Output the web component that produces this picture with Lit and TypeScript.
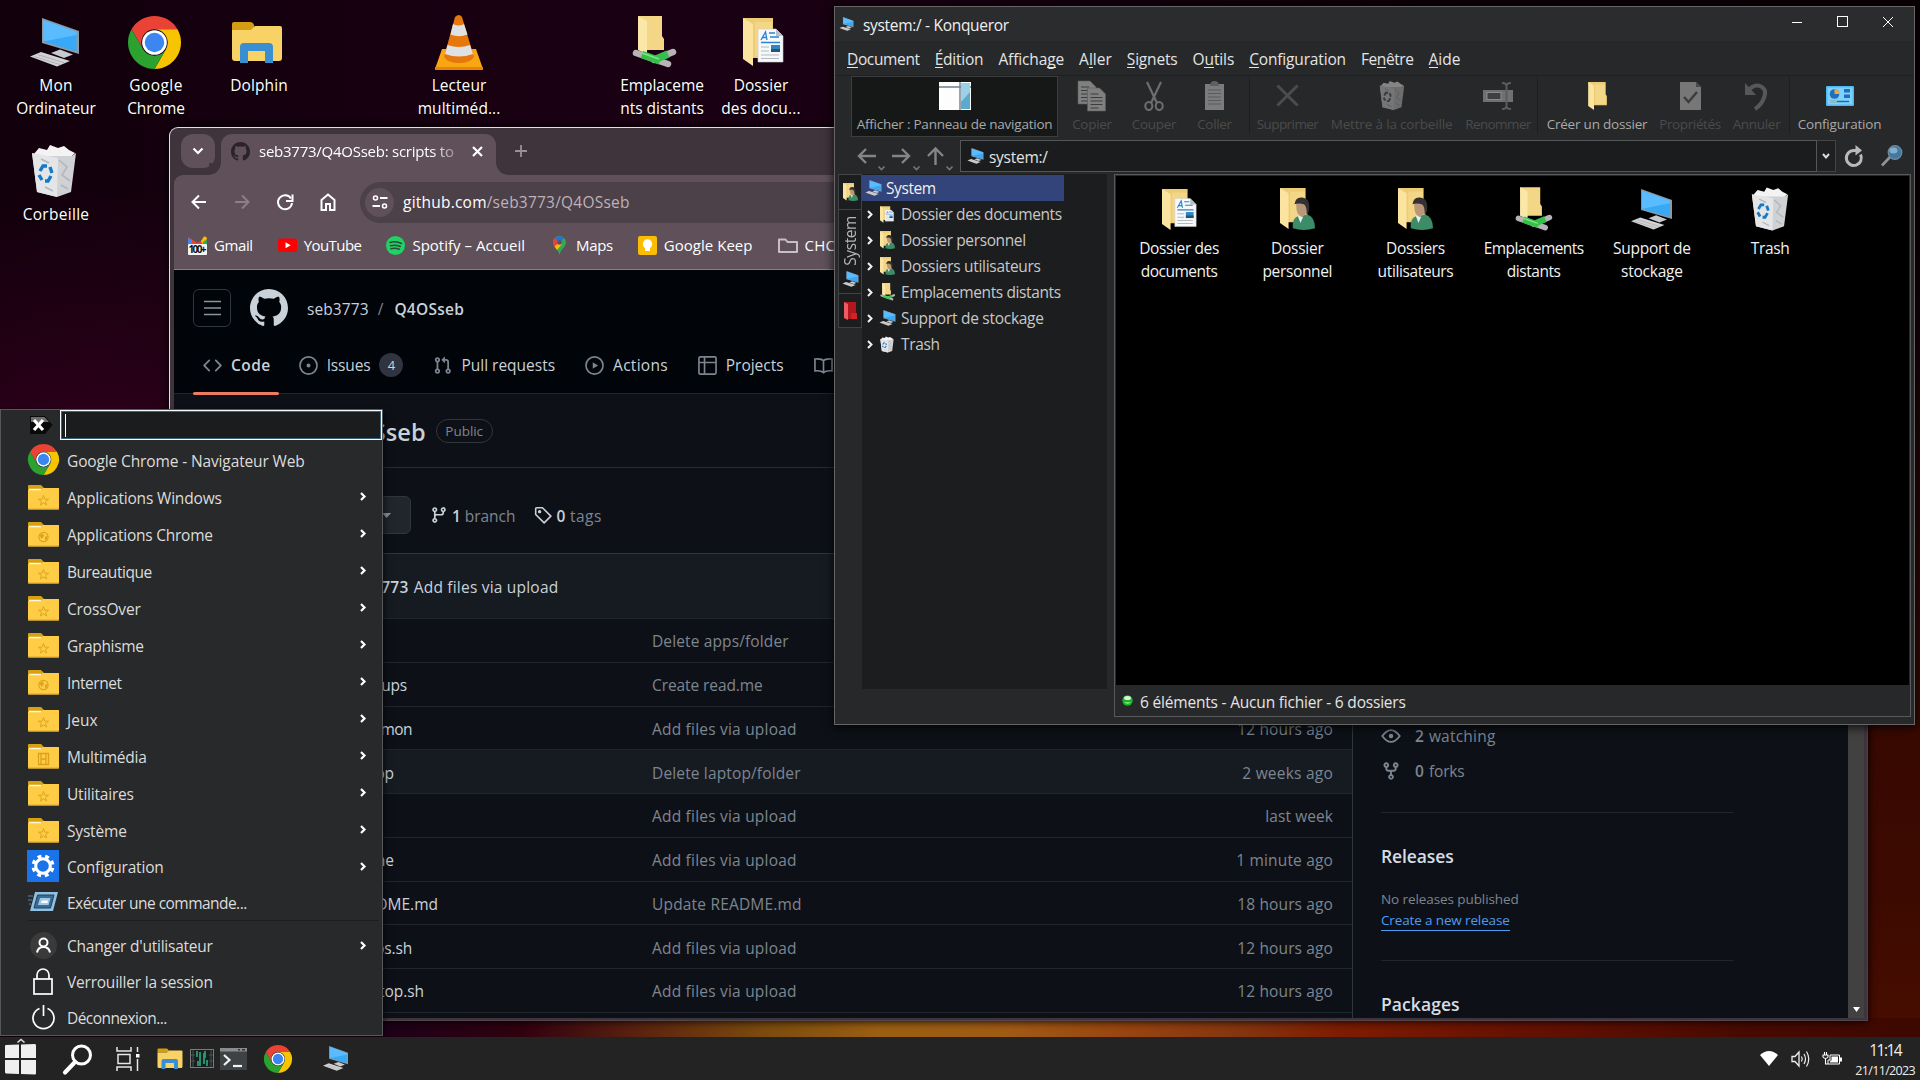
import { LitElement, html, svg, css, nothing } from "lit";
import { customElement, property } from "lit/decorators.js";
import { styleMap } from "lit/directives/style-map.js";
import { classMap } from "lit/directives/class-map.js";

/* ---------- text set to a given width ---------- */

@customElement("fit-text")
class FitText extends LitElement {
  @property({ type: Number }) w = 0;
  @property({ type: Boolean }) vertical = false;
  static styles = css`
    :host { display: inline-block; white-space: pre; flex: none; transform: translateY(var(--dy, 1px)); }
  `;
  render() {
    return html`<span><slot></slot></span>`;
  }
  firstUpdated() {
    if (!this.w) return;
    const box = (this.renderRoot.querySelector("span") as HTMLElement).getBoundingClientRect();
    const n = (this.textContent || "").length;
    const spacing = (this.w + 0.7 - (this.vertical ? box.height : box.width)) / n;
    this.style.letterSpacing = spacing.toFixed(3) + "px";
  }
}

const fit = (text: unknown, w: number) => html`<fit-text w=${w}>${text}</fit-text>`;

/* ---------- icons ---------- */

const ic = (w: number, h: number, vb: string, body: unknown) =>
  html`<svg width=${w} height=${h} viewBox=${vb} fill="none">${body}</svg>`;

const computer = (w: number, h: number) =>
  ic(w, h, "0 0 51 49", svg`
    <path d="M13 0 50 13V36L13 25Z" fill="#8d9aa5"/>
    <path d="M14.300 2 47.500 13.800V33.500L14.300 23.600Z" fill="#38a9f7"/>
    <path d="M14.300 2 47.500 13.800V17L14.300 23.600Z" fill="#5abcff"/>
    <path d="M22 35 31 31.500 44 36.500 35 40Z" fill="#c6c9cd"/>
    <path d="M1 38.500 12 34 41 43 28 48.500Z" fill="#d3d3d6"/>
    <path d="M5 38.500 31 46.500M9 36.700 35 44.700" stroke="#a7a8ad" stroke-width=".8"/>`);

const chrome = (s: number) =>
  ic(s, s, "0 0 48 48", svg`
    <path d="M3.210 12A24 24 0 0 1 44.790 12H24A12 12 0 0 0 13.610 30Z" fill="#ea4335"/>
    <path d="M44.790 12A24 24 0 0 1 24 48L34.390 30A12 12 0 0 0 24 12Z" fill="#f6c400"/>
    <path d="M24 48A24 24 0 0 1 3.210 12L13.610 30A12 12 0 0 0 34.390 30Z" fill="#2ba22f"/>
    <circle cx="24" cy="24" r="11.200" fill="#fff"/>
    <circle cx="24" cy="24" r="8.800" fill="#3b86f0"/>`);

const explorer = (w: number, h: number) =>
  ic(w, h, "0 0 52 42", svg`
    <path d="M1 3Q1 1 3 1H19Q22 1 23 4L24 9H1Z" fill="#d39e12"/>
    <path d="M1 9H20L24 5H49Q51 5 51 7V37Q51 40 48 40H4Q1 40 1 37Z" fill="#f9d266"/>
    <path d="M9 42V26Q9 22 13 22H38Q42 22 42 26V42H34V30H17V42Z" fill="#3a8ed2"/>`);

const vlc = () =>
  ic(50, 57, "0 0 50 57", svg`
    <path d="M8 35H42L49 55H1Z" fill="#f8a713"/><path d="M1 53H49V56H1Z" fill="#e98307"/>
    <path d="M21 3Q25 -1 28 3L40 43Q36 49 25 49T10 43Z" fill="#e5770d"/>
    <path d="M19 10Q25 13 30 10L33.500 20.500Q25 24 16.500 20.500Z" fill="#dfe1e3"/>
    <path d="M13.500 31Q25 35 36 31L39 40Q25 45 11 40Z" fill="#dfe1e3"/>`);

const openFolder = svg`
  <path d="M0 0H30V21L32 24V40H8Z" fill="#edcb77"/>
  <path d="M12 4H29V22L31 25V38H12Z" fill="#f3d686"/>
  <path d="M0 0 10 6V48L0 41Z" fill="#fbe4a0"/>`;

const folderDoc = (w: number, h: number) =>
  ic(w, h, "0 0 41 48", svg`${openFolder}
    <path d="M15 11H33L40 18V44H15Z" fill="#f6f8fa" stroke="#c9ccd0" stroke-width=".6"/>
    <path d="M33 11V18H40Z" fill="#b9bfc6"/>
    <path d="M18 22 22.500 14 24 22M19.500 19.500H24M26 15H32M27 19H36M18 24.500H37" stroke="#2b82cf" stroke-width="1.300"/>
    <path d="M18 29H26M18 33H26M18 37H36M18 40.500H36" stroke="#b4bac2" stroke-width="1.200"/>
    <path d="M28 27H37V34H28Z" fill="#2f86c4"/><path d="M28 31H37V34H28Z" fill="#27566b"/>`);

const folderUser = (w: number, h: number) =>
  ic(w, h, "0 0 41 49", svg`${openFolder}
    <path d="M15 47Q14 35 21 33L32 31Q41 34 41 47Q28 51 15 47Z" fill="#3c8c68"/>
    <path d="M21 33 24 31 27 34 24 41Z" fill="#e8eef0"/>
    <path d="M19 20Q19 15 25 15T32 22Q32 32 25 34 19 31 19 20Z" fill="#b9977a"/>
    <path d="M17 19Q18 10 26 11Q36 12 34 27L31 31Q32 22 28 19Q22 17 17 19Z" fill="#353132"/>`);

const folderNet = (w: number, h: number) =>
  ic(w, h, "0 0 44 53", svg`
    <path d="M6 0H30V20L32 23V34H10Z" fill="#f3d686"/>
    <path d="M6 0 15 5V38L6 34Z" fill="#fbe7a8"/>
    <path d="M4 37 36 48M22 44 41 36" stroke="#b7b3b8" stroke-width="6.500" stroke-linecap="round"/>
    <path d="M10 38.500 28 45M22 44 36 38" stroke="#35c04b" stroke-width="7.500"/>
    <path d="M10 37 27 43" stroke="#7fe38a" stroke-width="1.500"/>`);

const bin = (w: number, h: number, gray = false) =>
  ic(w, h, "0 0 46 52", svg`
    <path d="M2 10 8 3 16 5 19 0 27 3 33 1 38 5 44 8 40 12H4Z" fill=${gray ? "#858585" : "#f3f3f3"}/>
    <path d="M1 8 6 11H41L45 8 40 47 26 52 6 47Z" fill=${gray ? "#6e6e6e" : "#cfd1d4"}/>
    <path d="M1 8 27 13 26 52 6 47Z" fill=${gray ? "#767676" : "#e4e5e7"}/>
    <path d="M10 14 18 18M28 15 36 22 31 30 39 36M30 40 37 44M14 42 22 46" stroke=${gray ? "#5c5c5c" : "#b4b6ba"} stroke-width="1.600"/>
    <path d="M9 26 12 21H16M19 22 21 28M20 31 17 36H14M11 35 8 30" stroke=${gray ? "#3a3a3a" : "#1479c9"} stroke-width="3.400"/>`);

const oct = (s: number, d: string, cls = "") =>
  html`<svg class=${cls} width=${s} height=${s} viewBox="0 0 16 16" fill="currentColor"><path d=${d} /></svg>`;
const octStroke = (s: number, body: unknown) =>
  html`<svg width=${s} height=${s} viewBox="0 0 16 16" fill="none" stroke="currentColor" stroke-width="1.400">${body}</svg>`;

const GITHUB = "M8 0c4.420 0 8 3.580 8 8a8.013 8.013 0 0 1-5.450 7.590c-.4.080-.55-.17-.55-.38 0-.27.010-1.130.010-2.200 0-.75-.25-1.230-.54-1.480 1.780-.2 3.650-.88 3.650-3.950 0-.88-.31-1.590-.82-2.150.080-.2.360-1.020-.08-2.120 0 0-.67-.22-2.200.820-.64-.18-1.320-.27-2-.27-.68 0-1.360.090-2 .27-1.530-1.030-2.200-.82-2.200-.82-.44 1.100-.16 1.920-.08 2.120-.51.560-.82 1.280-.82 2.150 0 3.060 1.860 3.750 3.640 3.950-.23.200-.44.550-.51 1.070-.46.210-1.610.550-2.330-.66-.15-.24-.6-.83-1.230-.82-.67.010-.27.380.010.530.340.190.730.900.820 1.130.160.450.680 1.310 2.690.940 0 .67.010 1.300.010 1.490 0 .21-.15.450-.55.380A7.995 7.995 0 0 1 0 8c0-4.420 3.580-8 8-8Z";
const CODE = "m11.280 3.220 4.250 4.250a.75.750 0 0 1 0 1.060l-4.250 4.250a.749.749 0 0 1-1.275-.326.749.749 0 0 1 .215-.734L13.940 8l-3.720-3.720a.749.749 0 0 1 .326-1.275.749.749 0 0 1 .734.215Zm-6.560 0a.751.751 0 0 1 1.042.018.751.751 0 0 1 .018 1.042L2.060 8l3.720 3.720a.749.749 0 0 1-.326 1.275.749.749 0 0 1-.734-.215L.47 8.530a.75.750 0 0 1 0-1.060Z";
const PULL = "M1.500 3.250a2.250 2.250 0 1 1 3 2.122v5.256a2.251 2.251 0 1 1-1.500 0V5.372A2.250 2.250 0 0 1 1.500 3.250Zm5.677-.177L9.573.677A.25.250 0 0 1 10 .854V2.500h1A2.500 2.500 0 0 1 13.500 5v5.628a2.251 2.251 0 1 1-1.500 0V5a1 1 0 0 0-1-1h-1v1.646a.25.250 0 0 1-.427.177L7.177 3.427a.25.250 0 0 1 0-.354ZM3.750 2.500a.75.750 0 1 0 0 1.500.75.750 0 0 0 0-1.500Zm0 9.500a.75.750 0 1 0 0 1.500.75.750 0 0 0 0-1.500Zm8.250.75a.75.750 0 1 0 1.500 0 .75.750 0 0 0-1.500 0Z";
const BRANCH = "M9.500 3.250a2.250 2.250 0 1 1 3 2.122V6A2.500 2.500 0 0 1 10 8.500H6a1 1 0 0 0-1 1v1.128a2.251 2.251 0 1 1-1.500 0V5.372a2.250 2.250 0 1 1 1.500 0v1.836A2.493 2.493 0 0 1 6 7h4a1 1 0 0 0 1-1v-.628A2.250 2.250 0 0 1 9.500 3.250Zm-6 0a.75.750 0 1 0 1.500 0 .75.750 0 0 0-1.500 0Zm8.250-.75a.75.750 0 1 0 0 1.500.75.750 0 0 0 0-1.500ZM4.250 12a.75.750 0 1 0 0 1.500.75.750 0 0 0 0-1.500Z";
const FORK = "M5 5.372v.878c0 .414.336.75.750.75h4.500a.75.750 0 0 0 .75-.75v-.878a2.250 2.250 0 1 1 1.500 0v.878a2.250 2.250 0 0 1-2.250 2.250h-1.500v2.128a2.251 2.251 0 1 1-1.500 0V8.500h-1.500A2.250 2.250 0 0 1 3.500 6.250v-.878a2.250 2.250 0 1 1 1.500 0ZM5 3.250a.75.750 0 1 0-1.500 0 .75.750 0 0 0 1.500 0Zm6.750.75a.75.750 0 1 0 0-1.500.75.750 0 0 0 0 1.500Zm-3 8.750a.75.750 0 1 0-1.500 0 .75.750 0 0 0 1.500 0Z";

const base = css`
  * { box-sizing: border-box; }
  svg { display: block; flex: none; overflow: visible; }
  .row { display: flex; align-items: center; }
`;

/* ---------- desktop icons ---------- */

type Shortcut = { x: number; y: number; dx: number; icon: unknown; lines: [string, number][] };
const shortcuts: Shortcut[] = [
  { x: 56, y: 14, dx: -2, icon: computer(51, 49), lines: [["Mon", 33], ["Ordinateur", 79]] },
  { x: 156, y: 14, dx: -2, icon: chrome(53), lines: [["Google", 53], ["Chrome", 57]] },
  { x: 259, y: 14, dx: -2, icon: explorer(52, 42), lines: [["Dolphin", 57]] },
  { x: 459, y: 14, dx: 0, icon: vlc(), lines: [["Lecteur", 54], ["multiméd...", 82]] },
  { x: 662, y: 14, dx: -8, icon: folderNet(44, 53), lines: [["Emplaceme", 83], ["nts distants", 83]] },
  { x: 761, y: 14, dx: 2, icon: folderDoc(41, 48), lines: [["Dossier", 54], ["des docu...", 79]] },
  { x: 56, y: 143, dx: -2, icon: bin(46, 52), lines: [["Corbeille", 66]] },
];

@customElement("desktop-icons")
class DesktopIcons extends LitElement {
  static styles = [base, css`
    .item { position: absolute; width: 120px; display: flex; flex-direction: column; align-items: center; }
    .pic { height: 56px; display: flex; align-items: center; position: relative; }
    .label { display: flex; flex-direction: column; align-items: center; margin-top: 3px; line-height: 23px;
      font-size: 15.500px; font-weight: 500; color: #fff; text-shadow: 1px 1px 2px #000; }
  `];
  render() {
    return shortcuts.map((s) => html`
      <div class="item" style=${styleMap({ left: s.x - 60 + "px", top: s.y + "px" })}>
        <div class="pic" style=${styleMap({ left: s.dx + "px" })}>${s.icon}</div>
        <div class="label">${s.lines.map(([t, w]) => fit(t, w))}</div>
      </div>`);
  }
}

/* ---------- Chrome window ---------- */

const gmail = ic(19, 19, "0 0 19 19", svg`
  <path d="M0 9V1L9.500 7 19 1V9Z" fill="#e94235"/><path d="M0 9V2L4 4V9Z" fill="#4285f4"/>
  <path d="M13 5 16 .5Q19 0 19 4L15 9Z" fill="#fbbc04"/><path d="M15 9V6L19 3V9Z" fill="#34a853"/>
  <rect y="8" width="19" height="11" rx="1" fill="#f4f4f4"/>
  <text x="9.500" y="17.200" font-size="10" font-weight="700" text-anchor="middle" textLength="18" fill="#111">100+</text>`);
const youtube = ic(19, 19, "0 0 19 19", svg`<rect y="2.500" width="19" height="13.500" rx="3" fill="#f00"/><path d="M7.500 6.300V12.200L12.700 9.250Z" fill="#fff"/>`);
const spotify = ic(19, 19, "0 0 19 19", svg`<circle cx="9.500" cy="9.500" r="9.500" fill="#1fd263"/>
  <path d="M4 6.500Q10 4.800 15.500 7.500M4.500 9.700Q9.500 8.300 14.300 10.500M5 12.700Q9.500 11.500 13.300 13.300" stroke="#31473a" stroke-width="1.500" stroke-linecap="round"/>`);
const mapsPin = ic(19, 19, "0 0 19 19", svg`
  <path d="M9.500 0A6.500 6.500 0 0 1 16 6.500C16 11 10.500 13 9.500 19 8.500 13 3 11 3 6.500A6.500 6.500 0 0 1 9.500 0Z" fill="#34a853"/>
  <path d="M3 6.500A6.500 6.500 0 0 1 6 1L11 5 5 11Q3 9 3 6.500Z" fill="#ea4335"/>
  <path d="M5 2.500A6.500 6.500 0 0 1 14 2L9.500 7Z" fill="#1a73e8"/><path d="M4.500 10.500 9 6.500 12 8 7 14Z" fill="#fbbc04"/>
  <circle cx="9.500" cy="6.500" r="2.300" fill="#5f505a"/>`);
const keep = ic(19, 19, "0 0 19 19", svg`<rect width="19" height="19" rx="2" fill="#fbbc04"/><circle cx="9.500" cy="8" r="4.700" fill="#fff"/><path d="M7 11H12V15H7Z" fill="#fff"/>`);
const folderLine = ic(20, 19, "0 0 20 19", svg`<path d="M1 3.500H7.500L9.500 6H19V16H1Z" stroke="#c9bec5" stroke-width="2" stroke-linejoin="round"/>`);

const bookmarks: [unknown, string, number][] = [
  [gmail, "Gmail", 38], [youtube, "YouTube", 57], [spotify, "Spotify – Accueil", 112],
  [mapsPin, "Maps", 36], [keep, "Google Keep", 88], [folderLine, "CHC", 30],
];

type FileRow = { name: string; nw: number; right: number; msg: string; mw: number; ago: string; aw: number; hot?: boolean };
const files: FileRow[] = [
  { name: "apps", nw: 33, right: 375, msg: "Delete apps/folder", mw: 136, ago: "", aw: 0 },
  { name: "backups", nw: 58, right: 407, msg: "Create read.me", mw: 110, ago: "", aw: 0 },
  { name: "common", nw: 60, right: 412, msg: "Add files via upload", mw: 144, ago: "12 hours ago", aw: 95 },
  { name: "laptop", nw: 45, right: 394, msg: "Delete laptop/folder", mw: 148, ago: "2 weeks ago", aw: 90, hot: true },
  { name: "tools", nw: 35, right: 383, msg: "Add files via upload", mw: 144, ago: "last week", aw: 67 },
  { name: "theme", nw: 46, right: 394, msg: "Add files via upload", mw: 144, ago: "1 minute ago", aw: 96 },
  { name: "README.md", nw: 89, right: 438, msg: "Update README.md", mw: 149, ago: "18 hours ago", aw: 95 },
  { name: "apps.sh", nw: 54, right: 412, msg: "Add files via upload", mw: 144, ago: "12 hours ago", aw: 95 },
  { name: "laptop.sh", nw: 66, right: 424, msg: "Add files via upload", mw: 144, ago: "12 hours ago", aw: 95 },
];

@customElement("chrome-window")
class ChromeWindow extends LitElement {
  static styles = [base, css`
    :host { position: absolute; left: 169px; top: 127px; width: 1699px; height: 894px; box-sizing: border-box;
      display: flex; flex-direction: column; background: #40343c; border: 1px solid #eed9e6; border-right-color: #4c4148;
      border-bottom-color: #51464d; border-radius: 9px 9px 0 0; overflow: hidden; color: #fff; box-shadow: 0 0 8px #000; }
    .tabs { display: flex; align-items: flex-start; height: 47px; padding: 6px 0 0 11px; flex: none; --dy: 0px; }
    .pick { width: 34px; height: 34px; border-radius: 12px; background: #5f505a; display: grid; place-items: center; }
    .tab { position: relative; margin-left: 6px; width: 275px; height: 41px; background: #5f505a; border-radius: 11px 11px 0 0;
      padding: 0 12px 7px 10px; gap: 9px; }
    .tab::before, .tab::after { content: ""; position: absolute; bottom: 0; width: 12px; height: 12px; }
    .tab::before { left: -12px; background: radial-gradient(circle at 0 0, #40343c 11.500px, #5f505a 12px); }
    .tab::after { right: -12px; background: radial-gradient(circle at 100% 0, #40343c 11.500px, #5f505a 12px); }
    .fav { color: #2b2329; }
    .tabtitle { width: 204px; overflow: hidden; line-height: 22px; font-size: 15px;
      -webkit-mask-image: linear-gradient(90deg, #000 172px, rgba(0,0,0,.3) 198px); mask-image: linear-gradient(90deg, #000 172px, rgba(0,0,0,.3) 198px); }
    .plus { margin: 11px 0 0 19px; }
    .inner { margin: 0 3px 2px 4px; flex: 1; min-height: 0; display: flex; flex-direction: column; background: #5f505a; border-radius: 9px 0 0 0; }
    .bar { height: 54px; padding-left: 15px; gap: 23px; flex: none; --dy: 0px; }
    .omni { flex: 1; margin-left: -1px; height: 41px; border-radius: 21px; background: #4c4049; padding-left: 5px; gap: 9px; font-size: 15.500px; }
    .tune { width: 29px; height: 29px; border-radius: 50%; background: #5f505a; display: grid; place-items: center; }
    .dim { color: #bdb2b9; }
    .marks { height: 41px; padding: 0 0 8px 14px; gap: 25px; flex: none; font-size: 15px; border-bottom: 1px solid #8d7f88; --dy: 0px; }
    .mark { gap: 7px; }
    .page { flex: 1; min-height: 0; display: grid; grid-template-columns: 1fr 16px; background: #0d1117; color: #c9d1d9; font-size: 15.500px; }
    .doc { min-width: 0; min-height: 0; overflow: hidden; display: flex; flex-direction: column; }
    .scroll { background: #414142; display: flex; align-items: flex-end; justify-content: center; padding-bottom: 6px; }
    .head { background: #010409; height: 124px; border-bottom: 1px solid #21262d; flex: none; display: flex; flex-direction: column; }
    .crumb { height: 67px; padding: 8px 0 0 19px; }
    .burger { width: 38px; height: 38px; border: 1px solid #30363d; border-radius: 6px; display: grid; place-items: center; margin-right: 19px; }
    .crumb fit-text { margin-left: 9px; }
    .crumb .first { margin-left: 19px; }
    b { font-weight: 600; }
    .nav { height: 56px; padding-left: 29px; gap: 30px; color: #7d8590; --dy: 0px; }
    .nav .row { gap: 9px; }
    .nav fit-text { color: #c9d1d9; }
    .tabOn { position: relative; margin-right: -2px; }
    .tabOn::after { content: ""; position: absolute; left: -10px; right: -8px; bottom: -19px; height: 3px; background: #ee7a61; border-radius: 2px; }
    .num { width: 24px; height: 24px; border-radius: 12px; background: #2f3440; color: #c9d1d9; font-size: 13px; display: grid; place-items: center; }
    .cols { flex: 1; min-height: 0; display: grid; grid-template-columns: 1179px 1fr; }
    .left { border-right: 1px solid #30363d; display: flex; flex-direction: column; min-width: 0; }
    .title { height: 74px; border-bottom: 1px solid #272c33; padding-left: 148px; gap: 10px; font-size: 23.500px; flex: none; }
    .pill { height: 24px; width: 57px; border: 1px solid #30363d; border-radius: 12px; font-size: 13.500px; color: #7d8590; display: grid; place-items: center; line-height: 18px; --dy: 0px; }
    .refs { height: 85px; padding-top: 9px; flex: none; }
    .pickb { width: 137px; margin-left: 100px; height: 38px; background: #21262d; border: 1px solid #30363d; border-radius: 6px; display: flex; align-items: center; justify-content: flex-end; padding-right: 19px; }
    .refs .row { gap: 4px; margin-left: 19px; }
    .gray { color: #7d8590; }
    .commit { height: 65px; border-top: 1px solid #30363d; background: #161b22; padding-left: 171px; gap: 5px; flex: none; }
    .file { height: 43.750px; flex: none; border-top: 1px solid #21262d; display: flex; align-items: center; }
    .hot { background: #161b22; }
    .name { flex: none; display: flex; justify-content: flex-end; }
    .file .msg { color: #7d8590; }
    .ago { margin-left: auto; margin-right: 19px; color: #7d8590; }
    .side { padding: 326px 0 0 28px; display: flex; flex-direction: column; color: #7d8590; --dy: 0px; }
    .stat { height: 34.500px; gap: 14px; flex: none; padding-bottom: 2px; }
    .stat .row { gap: 5px; }
    .rule { width: 352px; height: 1px; background: #21262d; flex: none; }
    h3 { margin: 0; font-size: 17.500px; font-weight: 600; color: #d7dde3; line-height: 24px; }
    .small { font-size: 13.500px; line-height: 22px; }
    .small.link { color: #4e9cf2; border-bottom: 1px solid #4e9cf2; line-height: 18px; align-self: flex-start; padding-bottom: 1px; }
    .r1 { margin-top: 23px; }
    .rel { margin-top: 31px; }
    .none { margin-top: 20px; }
    .link { margin-top: 1px; }
    .r2 { margin-top: 29px; }
    .pkg { margin-top: 31px; }
  `];
  render() {
    return html`
      <div class="tabs">
        <div class="pick">${ic(12, 8, "0 0 12 8", svg`<path d="M1.500 1.500 6 6 10.500 1.500" stroke="#fff" stroke-width="2.200"/>`)}</div>
        <div class="tab row">
          ${oct(19, GITHUB, "fav")}
          <div class="tabtitle">${fit("seb3773/Q4OSseb: scripts to", 194)}</div>
          ${ic(11, 11, "0 0 11 11", svg`<path d="M1 1 10 10M10 1 1 10" stroke="#fff" stroke-width="2.200"/>`)}
        </div>
        <svg class="plus" width="12" height="12" viewBox="0 0 12 12"><path d="M6 0V12M0 6H12" stroke="#9b8f97" stroke-width="1.800"/></svg>
      </div>
      <div class="inner">
        <div class="bar row">
          ${ic(20, 20, "0 0 20 20", svg`<path d="M17 10H4M10 3.500 3.500 10 10 16.500" stroke="#fff" stroke-width="2"/>`)}
          ${ic(20, 20, "0 0 20 20", svg`<path d="M3 10H16M10 3.500 16.500 10 10 16.500" stroke="#8d7f88" stroke-width="2"/>`)}
          ${ic(20, 20, "0 0 20 20", svg`<path d="M16 6.500A7 7 0 1 0 17 11" stroke="#fff" stroke-width="2"/><path d="M17.500 2.500V9H11" stroke="#fff" stroke-width="2"/>`)}
          ${ic(20, 20, "0 0 20 20", svg`<path d="M3.500 18V8L10 2.500 16.500 8V18H12V12H8V18Z" stroke="#fff" stroke-width="2"/>`)}
          <div class="omni row">
            <div class="tune">${ic(16, 14, "0 0 16 14", svg`<circle cx="3.500" cy="3" r="2" stroke="#fff" stroke-width="1.600"/><circle cx="12.500" cy="11" r="2" stroke="#fff" stroke-width="1.600"/><path d="M8 3H15.500M.5 11H8" stroke="#fff" stroke-width="2"/>`)}</div>
            <fit-text w="226">github.com<span class="dim">/seb3773/Q4OSseb</span></fit-text>
          </div>
        </div>
        <div class="marks row">${bookmarks.map(([i, t, w]) => html`<div class="mark row">${i}${fit(t, w)}</div>`)}</div>
        <div class="page">
          <div class="doc">
            <div class="head">
              <div class="crumb row">
                <div class="burger">${ic(17, 16, "0 0 17 16", svg`<path d="M0 1.500H17M0 8H17M0 14.500H17" stroke="#8b939c" stroke-width="1.700"/>`)}</div>
                ${oct(38, GITHUB)}
                <fit-text class="first" w="61">seb3773</fit-text><fit-text class="gray" w="7">/</fit-text><fit-text w="69"><b>Q4OSseb</b></fit-text>
              </div>
              <div class="nav row">
                <div class="row tabOn">${oct(19, CODE)}<fit-text w="39"><b>Code</b></fit-text></div>
                <div class="row">${octStroke(19, svg`<circle cx="8" cy="8" r="7.200"/><circle cx="8" cy="8" r="1" fill="currentColor"/>`)}${fit("Issues", 43)}<span class="num">4</span></div>
                <div class="row">${oct(19, PULL)}${fit("Pull requests", 93)}</div>
                <div class="row">${octStroke(19, svg`<circle cx="8" cy="8" r="7.200"/><path d="M6.500 5.200V10.800L11 8Z" fill="currentColor" stroke="none"/>`)}${fit("Actions", 54)}</div>
                <div class="row">${octStroke(19, svg`<rect x=".8" y=".8" width="14.400" height="14.400" rx="1"/><path d="M5.500 1V15M1 5.500H15"/>`)}${fit("Projects", 57)}</div>
                <div class="row">${octStroke(19, svg`<path d="M8 4Q6.500 2 .8 2.500V12.500Q6 12 8 14 10 12 15.200 12.500V2.500Q9.500 2 8 4V14"/>`)}${fit("Wiki", 30)}</div>
              </div>
            </div>
            <div class="cols">
              <div class="left">
                <div class="title row"><fit-text w="103"><b>Q4OSseb</b></fit-text><span class="pill">${fit("Public", 37)}</span></div>
                <div class="refs row">
                  <div class="pickb">${ic(9, 5, "0 0 9 5", svg`<path d="M0 0H9L4.500 5Z" fill="#8b939c"/>`)}</div>
                  <div class="row">${oct(18, BRANCH)}<fit-text w="8"><b>1</b></fit-text><fit-text class="gray" w="50">branch</fit-text></div>
                  <div class="row">${octStroke(18, svg`<path d="M1.500 2.500Q1.500 1.500 2.500 1.500H7.500L15 9 9 15 1.500 7.500Z" stroke-linejoin="round"/><circle cx="5" cy="5" r=".8" fill="currentColor"/>`)}<fit-text w="9"><b>0</b></fit-text><fit-text class="gray" w="31">tags</fit-text></div>
                </div>
                <div class="commit row"><fit-text w="63"><b>seb3773</b></fit-text>${fit("Add files via upload", 144)}</div>
                ${files.map((f) => html`
                  <div class=${classMap({ file: true, hot: !!f.hot })}>
                    <span class="name" style=${styleMap({ width: f.right - 174 + "px", "margin-right": 652 - f.right + "px" })}>${fit(f.name, f.nw)}</span>
                    <span class="msg">${fit(f.msg, f.mw)}</span>
                    ${f.ago ? html`<span class="ago">${fit(f.ago, f.aw)}</span>` : nothing}
                  </div>`)}
                <div class="file"></div>
              </div>
              <div class="side">
                <div class="stat row">${octStroke(20, svg`<path d="M1 8Q8-1.500 15 8 8 17.500 1 8Z"/><circle cx="8" cy="8" r="1.800" fill="currentColor" stroke="none"/>`)}<span class="row"><b>2</b>${fit("watching", 66)}</span></div>
                <div class="stat row">${oct(20, FORK)}<span class="row"><b>0</b>${fit("forks", 35)}</span></div>
                <div class="rule r1"></div>
                <h3 class="rel">${fit("Releases", 72)}</h3>
                <div class="small none">${fit("No releases published", 137)}</div>
                <div class="small link">${fit("Create a new release", 128)}</div>
                <div class="rule r2"></div>
                <h3 class="pkg">${fit("Packages", 78)}</h3>
              </div>
            </div>
          </div>
          <div class="scroll">${ic(7, 5, "0 0 7 5", svg`<path d="M0 0H7L3.500 5Z" fill="#fff"/>`)}</div>
        </div>
      </div>`;
  }
}

/* ---------- Konqueror window ---------- */

const menus: [unknown, number][] = [
  [html`<u>D</u>ocument`, 72], [html`<u>É</u>dition`, 48], [html`Afficha<u>g</u>e`, 65], [html`A<u>l</u>ler`, 32],
  [html`<u>S</u>ignets`, 50], [html`O<u>u</u>tils`, 41], [html`<u>C</u>onfiguration`, 96], [html`Fe<u>n</u>être`, 52], [html`<u>A</u>ide`, 31],
];

const page = (x: number, y: number) => svg`<path d=${`M${x} ${y}h12l6 6v17h-18Z`} fill="#808080" stroke="#5a5a5a" stroke-width=".6"/>
  <path d=${`M${x + 3} ${y + 6}h8m-8 3.500h12m-12 3.500h12m-12 3.500h12m-12 3.500h8`} stroke="#3c3c3c" stroke-width="1.100"/>`;

type Tool = { icon: unknown; label: string; w: number; state: string } | null;
const tools: Tool[] = [
  { label: "Afficher : Panneau de navigation", w: 195, state: "on", icon: ic(32, 28, "0 0 32 28", svg`<rect width="32" height="28" fill="#fdfdfd"/><path d="M0 5H32M21 0V28" stroke="#6f7f93" stroke-width="1.400"/><rect x="22" y="1" width="9" height="26" fill="#5da9cc"/><path d="M22 1H31V10L22 20Z" fill="#9cd0e6"/>`) },
  { label: "Copier", w: 39, state: "off", icon: ic(28, 30, "0 0 28 30", svg`${page(0, 0)}${page(9.500, 7)}`) },
  { label: "Couper", w: 44, state: "off", icon: ic(20, 30, "0 0 20 30", svg`<path d="M3 1 13 22M17 1 7 22" stroke="#6e6e6e" stroke-width="2.200"/><ellipse cx="4.800" cy="25" rx="3.500" ry="4" stroke="#6e6e6e" stroke-width="2"/><ellipse cx="15.200" cy="25" rx="3.500" ry="4" stroke="#6e6e6e" stroke-width="2"/>`) },
  { label: "Coller", w: 34, state: "off", icon: ic(19, 29, "0 0 19 29", svg`<rect y="3" width="19" height="26" fill="#7c7c7c"/><path d="M5 5Q5 0 9.500 0T14 5Z" fill="#606060"/><path d="M3 9H16M3 12.500H16M3 16H16M3 19.500H16M3 23H16" stroke="#5a5a5a"/>`) },
  null,
  { label: "Supprimer", w: 61, state: "off", icon: ic(23, 23, "0 0 24 24", svg`<path d="M1.500 1.500 22.500 22.500M22.500 1.500 1.500 22.500" stroke="#4c4d4d" stroke-width="3"/>`) },
  { label: "Mettre à la corbeille", w: 121, state: "off", icon: bin(26, 29, true) },
  { label: "Renommer", w: 65, state: "off", icon: ic(31, 28, "0 0 31 28", svg`<rect x="0" y="8" width="30" height="12" fill="#707070"/><rect x="4" y="10.500" width="14" height="7" fill="#3f4040" stroke="#8a8a8a"/><path d="M23.500 2V26M19 1Q23.500 1 23.500 4 23.500 1 28 1M19 27Q23.500 27 23.500 24 23.500 27 28 27" stroke="#5c5c5c" stroke-width="2"/>`) },
  null,
  { label: "Créer un dossier", w: 100, state: "", icon: ic(19, 28, "0 0 32 48", openFolder) },
  { label: "Propriétés", w: 61, state: "off", icon: ic(21, 28, "0 0 21 28", svg`<path d="M0 0H16L21 5V28H0Z" fill="#777"/><path d="M16 0V5H21Z" fill="#4a4a4a"/><path d="M4 15 8.500 20 17 10" stroke="#3c3c3c" stroke-width="2.400"/>`) },
  { label: "Annuler", w: 47, state: "off", icon: ic(25, 28, "0 0 25 28", svg`<path d="M3 10Q10 1 17 4.500T19 18Q17 23 11 27" stroke="#575858" stroke-width="4"/><path d="M1 1V13H12Z" fill="#575858"/>`) },
  null,
  { label: "Configuration", w: 83, state: "", icon: ic(28, 20, "0 0 28 20", svg`<rect width="28" height="20" rx="1" fill="#4cb9f5"/><rect x="1.500" y="1.500" width="25" height="17" fill="#7fd0fa"/><circle cx="8.500" cy="8" r="4.800" fill="#1d6fc0"/><path d="M8.500 8V3.200A4.800 4.800 0 0 1 13.300 8Z" fill="#f4a93c"/><rect x="18" y="3" width="6" height="3.500" fill="#1d6fc0"/><rect x="18" y="8.500" width="6" height="3.500" fill="#1d6fc0"/><path d="M4 15.500H23" stroke="#1668b3" stroke-width="1.400"/><path d="M4 15.500H11" stroke="#f4a93c" stroke-width="1.400"/>`) },
];

const tree: [unknown, string, number][] = [
  [folderDoc(14, 17), "Dossier des documents", 160],
  [folderUser(15, 18), "Dossier personnel", 124],
  [folderUser(15, 18), "Dossiers utilisateurs", 139],
  [folderNet(15, 18), "Emplacements distants", 159],
  [computer(17, 16), "Support de stockage", 142],
  [bin(14, 17), "Trash", 38],
];
const places: [unknown, [string, number][]][] = [
  [folderDoc(35, 41), [["Dossier des", 79], ["documents", 76]]],
  [folderUser(35, 42), [["Dossier", 52], ["personnel", 69]]],
  [folderUser(35, 42), [["Dossiers", 58], ["utilisateurs", 75]]],
  [folderNet(37, 45), [["Emplacements", 99], ["distants", 53]]],
  [computer(43, 41), [["Support de", 77], ["stockage", 61]]],
  [bin(38, 44), [["Trash", 38]]],
];

const chevR = ic(6, 9, "0 0 6 9", svg`<path d="M1 1 4.500 4.500 1 8" stroke="#f2f2f2" stroke-width="2"/>`);
const chevD = html`<svg class="cd" width="7" height="5" viewBox="0 0 7 5" fill="none"><path d="M.5 .5 3.500 3.500 6.500 .5" stroke="#777" stroke-width="1.600"/></svg>`;

@customElement("konqueror-window")
class KonquerorWindow extends LitElement {
  static styles = [base, css`
    :host { position: absolute; left: 834px; top: 6px; width: 1081px; height: 719px; box-sizing: border-box; border: 1px solid #666;
      background: #272829; color: #e4e4e4; display: flex; flex-direction: column; font-size: 15.500px; box-shadow: 0 2px 9px 1px #000b; }
    .title { height: 34px; background: #2a2c2e; padding: 0 21px 0 4px; flex: none; }
    .title fit-text { margin-left: 9px; color: #f0f0f0; }
    .btns { margin: -5px 0 0 auto; gap: 35px; }
    .menu { height: 34px; padding-left: 12px; gap: 15px; flex: none; }
    u { text-decoration: none; box-shadow: inset 0 -1px #e4e4e4; display: inline-block; line-height: 18px; }
    .tools { height: 63px; border-top: 1px solid #1f2021; padding-left: 16px; flex: none; display: grid; --dy: 0px;
      grid-template-columns: 207px 68px 56px 65px 4px 73px 135px 78px 1px 118px 68px 65px 1px 99px; align-items: start; }
    .tool { height: 61px; display: flex; flex-direction: column; align-items: center; font-size: 13.500px; color: #a8a9a9; }
    .tool .pic { height: 33px; margin-top: 3px; display: grid; place-items: center; }
    .tool fit-text { line-height: 20px; margin-top: 2px; }
    .on { background: #161818; border: 1px solid #3c3d3d; }
    .on .pic { margin-top: 2px; }
    .off { color: #4a4b4c; }
    .sep { width: 1px; height: 58px; background: #1e1f20; justify-self: center; }
    .loc { height: 36px; padding: 0 11px 0 22px; flex: none; }
    .arrow { width: 35px; display: flex; align-items: center; }
    .cd { margin: 24px 0 0 2px; }
    .field { flex: 1; margin-left: -2px; height: 32px; background: #1b1c1d; border: 1px solid #555657; padding-left: 6px; gap: 5px; }
    .drop { width: 19px; height: 32px; border: 1px solid #444; border-left: 0; display: grid; place-items: center; background: #1f2021; }
    .re { margin-left: 8px; }
    .mg { margin-left: 17px; }
    .body { flex: 1; min-height: 0; display: grid; grid-template-columns: 24px 245px 1fr; padding: 0 3px 7px 3px; }
    .tabs { border-top: 1px solid #444; display: flex; flex-direction: column; --dy: 0px; }
    .vt { border: 1px solid #414243; border-top: 0; background: #1c1d1e; display: flex; flex-direction: column; align-items: center; justify-content: center; width: 24px; }
    .v1 { height: 35px; } .v2 { height: 84px; } .v3 { height: 34px; }
    .vt .rot { writing-mode: vertical-rl; transform: rotate(180deg); line-height: 20px; color: #b5b5b5; margin-bottom: 5px; }
    .tree { background: #1c1d1e; height: 515px; padding-top: 1px; --dy: 0px; }
    .node { height: 26px; padding-left: 5px; gap: 2px; color: #c8c8c8; }
    .node .pic { width: 24px; display: grid; place-items: center; }
    .sel { width: 202px; background: #32447a; color: #f0f0f0; padding-left: 3px; gap: 4px; }
    .view { margin-left: 7px; border: 1px solid #57595a; display: flex; flex-direction: column; }
    .canvas { background: #000; flex: 1; margin: 1px 1px 0; display: flex; padding: 10px 0 0 4px; color: #f2f2f2; }
    .place { width: 118.200px; display: flex; flex-direction: column; align-items: center; line-height: 23px; }
    .place .pic { height: 46px; margin-bottom: 4px; display: grid; place-items: center; }
    .status { height: 31px; padding-left: 7px; gap: 7px; flex: none; }
  `];
  render() {
    return html`
      <div class="title row">${computer(15, 14)}${fit("system:/ - Konqueror", 145)}
        <div class="btns row">
          ${ic(10, 10, "0 0 10 10", svg`<path d="M0 5.500H10" stroke="#fff"/>`)}
          ${ic(11, 11, "0 0 11 11", svg`<rect x=".5" y=".5" width="10" height="10" stroke="#fff"/>`)}
          ${ic(10, 10, "0 0 10 10", svg`<path d="M0 0 10 10M10 0 0 10" stroke="#fff"/>`)}
        </div>
      </div>
      <div class="menu row">${menus.map(([t, w]) => fit(t, w))}</div>
      <div class="tools">${tools.map((t) => t
        ? html`<div class="tool ${t.state}"><div class="pic">${t.icon}</div>${fit(t.label, t.w)}</div>`
        : html`<div class="sep"></div>`)}</div>
      <div class="loc row">
        <div class="arrow">${ic(19, 16, "0 0 19 16", svg`<path d="M19 8H2M9 1 2 8 9 15" stroke="#858585" stroke-width="2.400"/>`)}${chevD}</div>
        <div class="arrow">${ic(19, 16, "0 0 19 16", svg`<path d="M0 8H17M10 1 17 8 10 15" stroke="#858585" stroke-width="2.400"/>`)}${chevD}</div>
        <div class="arrow">${ic(17, 18, "0 0 17 18", svg`<path d="M8.500 18V2M1 9 8.500 1.500 16 9" stroke="#858585" stroke-width="2.400"/>`)}${chevD}</div>
        <div class="field row">${computer(17, 16)}${fit("system:/", 58)}</div>
        <div class="drop">${ic(8, 6, "0 0 8 6", svg`<path d="M1 1 4 4.500 7 1" stroke="#ddd" stroke-width="2"/>`)}</div>
        <svg class="re" width="20" height="22" viewBox="0 0 20 22" fill="none"><path d="M16.500 9.500A7.500 7.500 0 1 1 10 5.500H13" stroke="#b9b9b9" stroke-width="3"/><path d="M11.500 0 18 5.500 11.500 10.500Z" fill="#b9b9b9"/></svg>
        <svg class="mg" width="22" height="22" viewBox="0 0 22 22"><path d="M9 12 1 20.500" stroke="#8f9499" stroke-width="2.600"/><circle cx="14" cy="7.500" r="6.800" fill="#43799f" stroke="#6f8ca3" stroke-width="1.200"/><ellipse cx="12.500" cy="5.500" rx="4" ry="3" fill="#86aecb"/></svg>
      </div>
      <div class="body">
        <div class="tabs">
          <div class="vt v1">${folderUser(15, 18)}</div>
          <div class="vt v2"><span class="rot"><fit-text w="49" vertical>System</fit-text></span>${computer(17, 16)}</div>
          <div class="vt v3">${ic(13, 18, "0 0 13 18", svg`<path d="M0 0H12V17H3Z" fill="#b3161d"/><path d="M0 0 4 2V18L0 16Z" fill="#ee5a5f"/><rect x="7" y="11" width="6" height="6" fill="#d81f26"/>`)}</div>
        </div>
        <div class="tree">
          <div class="node sel row">${computer(17, 16)}${fit("System", 49)}</div>
          ${tree.map(([i, t, w]) => html`<div class="node row">${chevR}<span class="pic">${i}</span>${fit(t, w)}</div>`)}
        </div>
        <div class="view">
          <div class="canvas">${places.map(([i, ls]) => html`<div class="place"><div class="pic">${i}</div>${ls.map(([t, w]) => fit(t, w))}</div>`)}</div>
          <div class="status row">${ic(11, 11, "0 0 11 11", svg`<circle cx="5.500" cy="5.500" r="5.200" fill="#21b02c"/><ellipse cx="5.500" cy="3" rx="3.500" ry="2" fill="#d8f7d8"/><path d="M2 7Q5.500 11 9 7Z" fill="#6fe36f"/>`)}${fit("6 éléments - Aucun fichier - 6 dossiers", 265)}</div>
        </div>
      </div>`;
  }
}

/* ---------- start menu ---------- */

const menuFolder = (mark: unknown) => ic(31, 26, "0 0 31 26", svg`
  <path d="M0 2Q0 1 1 1H13L16 4H31V9H0Z" fill="#d9a011"/>
  <path d="M0 6H12L15 4H30Q31 4 31 5V24Q31 25.500 30 25.500H1Q0 25.500 0 24Z" fill="#fecd45"/>
  <path d="M1 5.500H13" stroke="#fff8dc" stroke-width="1.500"/><path d="M0 25H31" stroke="#e0a92a"/>${mark}`);
const star = svg`<path d="M15.500 11.500 16.800 15.200H20.600L17.500 17.500 18.700 21 15.500 18.900 12.300 21 13.500 17.500 10.400 15.200H14.200Z" stroke="#dfa522" stroke-width="1"/>`;
const globe = svg`<circle cx="15.500" cy="16" r="4.600" stroke="#dda120" stroke-width="1.200"/><path d="M11.500 14 15 12.500 16 15 13.500 18ZM17 16 19.500 14.500 19 18 17 19.500Z" fill="#dda120"/>`;
const film = svg`<path d="M10.500 10.500H20.500V21.500H10.500ZM13 10.500V21.500M18 10.500V21.500M13 16H18" stroke="#dba11c" stroke-width="1.300"/>`;

const gear = ic(32, 32, "0 0 32 32", svg`<rect width="32" height="32" fill="#1a73e8"/>
  <circle cx="16" cy="16" r="7.300" stroke="#fff" stroke-width="3"/>
  <circle cx="16" cy="16" r="9.800" stroke="#fff" stroke-width="3.400" stroke-dasharray="3.850 3.850" stroke-dashoffset="-1.900"/>`);
const run = ic(30, 20, "0 0 30 20", svg`<path d="M7 0H30L25 19H2Z" fill="#8fc1e3"/><path d="M9.500 3H26L22.500 16H6Z" fill="#3c6b92" stroke="#23405c"/>
  <path d="M12 6H22.500L20.500 13H10Z" fill="#9cc9e8"/><path d="M14 8.500H20L19.500 11H13Z" fill="#fff"/><path d="M0 4H5M0 8H4M1 12H3" stroke="#5c84a5"/>`);
const user = ic(27, 27, "0 0 27 27", svg`<circle cx="13.500" cy="13.500" r="13.500" fill="#3a3a3b"/><circle cx="13.500" cy="10.500" r="4" stroke="#fff" stroke-width="2"/><path d="M7 20.500Q8 15 13.500 15T20 20.500" stroke="#fff" stroke-width="2"/>`);
const lock = ic(20, 27, "0 0 20 27", svg`<rect x="1" y="11" width="18" height="15" stroke="#fff" stroke-width="1.700"/><path d="M4 11V7A6 6 0 0 1 16 7V11" stroke="#fff" stroke-width="1.700"/>`);
const power = ic(23, 25, "0 0 23 25", svg`<path d="M7.500 3.500A10.500 10.500 0 1 0 15.500 3.500M11.500 0V11" stroke="#fff" stroke-width="1.700"/>`);

const entries: [unknown, string, number, boolean, number][] = [
  [chrome(31), "Google Chrome - Navigateur Web", 237, false, 37],
  [menuFolder(star), "Applications Windows", 154, true, 37],
  [menuFolder(globe), "Applications Chrome", 145, true, 37],
  [menuFolder(star), "Bureautique", 84, true, 37],
  [menuFolder(star), "CrossOver", 73, true, 37],
  [menuFolder(star), "Graphisme", 76, true, 37],
  [menuFolder(globe), "Internet", 54, true, 37],
  [menuFolder(star), "Jeux", 30, true, 37],
  [menuFolder(film), "Multimédia", 79, true, 37],
  [menuFolder(star), "Utilitaires", 66, true, 37],
  [menuFolder(star), "Système", 59, true, 37],
  [gear, "Configuration", 96, true, 36],
  [run, "Exécuter une commande...", 179, false, 36],
  [user, "Changer d'utilisateur", 145, true, 36],
  [lock, "Verrouiller la session", 145, false, 36],
  [power, "Déconnexion...", 99, false, 36],
];

@customElement("start-menu")
class StartMenu extends LitElement {
  static styles = [base, css`
    :host { position: absolute; left: 0; top: 409px; width: 383px; height: 627px; box-sizing: border-box; background: #28292a;
      border: 1px solid #57585a; display: flex; flex-direction: column; color: #dcdcdc; font-size: 15.500px; box-shadow: 2px 2px 6px #0008; }
    .find { height: 31px; padding: 0 0 1px 29px; flex: none; }
    .input { flex: 1; margin-left: 7px; height: 30px; border: 1px solid #f2fbff; box-shadow: inset 0 0 0 1px #3d6478; background: #1b1c1d; display: flex; align-items: center; padding-left: 4px; }
    .caret { width: 1px; height: 23px; background: #fff; }
    .entry { padding: 0 16px 0 26px; }
    .pic { width: 32px; display: grid; place-items: center; margin-right: 8px; }
    .go { margin-left: auto; }
    .gap { height: 7px; border-top: 1px solid #1d1e1f; margin: 0 3px 0 27px; flex: none; }
  `];
  render() {
    return html`
      <div class="find row">
        ${ic(23, 18, "0 0 23 18", svg`<path d="M0 0H15L22.500 9 15 18H0Z" fill="#0a0a0a"/><path d="M1 1H14.500L19 6H1Z" fill="#6c6d6e"/><path d="M4 4 13 14M13 4 4 14" stroke="#fff" stroke-width="3.200"/>`)}
        <div class="input"><i class="caret"></i></div>
      </div>
      ${entries.map(([i, t, w, sub, h], n) => html`
        ${n === 13 ? html`<div class="gap"></div>` : nothing}
        <div class="entry row" style=${styleMap({ height: h + "px" })}>
          <span class="pic">${i}</span>${fit(t, w)}
          ${sub ? html`<span class="go">${ic(6, 9, "0 0 6 9", svg`<path d="M1 1 4.500 4.500 1 8" stroke="#fff" stroke-width="2.200"/>`)}</span>` : nothing}
        </div>`)}`;
  }
}

/* ---------- task bar ---------- */

const dock: [number, unknown][] = [
  [5, ic(31, 34, "0 0 31 34", svg`<g fill="#f0f0f0"><path d="M0 4Q0 3 1 3L14 2.500V16H0Z"/><path d="M16 2.500 30 2Q31 2 31 3.500V16H16Z"/><path d="M0 18H14V32L1 31.500Q0 31 0 30Z"/><path d="M16 18H31V31Q31 32.500 30 32.500L16 32Z"/></g><path d="M12.500 .5 16-2.500 19.500 .5" stroke="#ddd" stroke-width="1.600"/>`)],
  [27, ic(29, 30, "0 0 29 30", svg`<circle cx="18.500" cy="11" r="9" stroke="#fff" stroke-width="3"/><path d="M12 18 2 28.500" stroke="#fff" stroke-width="4.200" stroke-linecap="round"/>`)],
  [24, ic(24, 24, "0 0 24 24", svg`<path d="M1 0V4H15V0M1 24V20H15V24M2 7.500H14V16.500H2Z" stroke="#e8e8e8" stroke-width="1.500"/><path d="M21.500 0V5M21.500 12V24" stroke="#e8e8e8" stroke-width="1.500"/><rect x="20" y="7" width="3.500" height="3.500" fill="#fff"/>`)],
  [17, explorer(26, 21)],
  [7, ic(24, 19, "0 0 24 19", svg`<rect x=".5" y=".5" width="23" height="18" fill="#17201e" stroke="#7b7b7b"/><path d="M3 1V18M21 1V18M1 6H5M1 12H5M19 6H23M19 12H23" stroke="#4c5250"/><path d="M7 2V8M10 3V17M15 2V9M17 11V17M8 12V17M14 4V15" stroke="#2b9a75" stroke-width="1.800"/>`)],
  [6, ic(27, 22, "0 0 27 22", svg`<rect width="27" height="22" fill="#3e4244"/><rect width="27" height="3.500" fill="#8a8d8f"/><path d="M18 1.700H20M22 1.700H25" stroke="#333" stroke-width="1.500"/><path d="M4 7 9.500 12 4 17" stroke="#f2f2f2" stroke-width="2.200"/><path d="M13 18H22" stroke="#f2f2f2" stroke-width="2.200"/>`)],
  [17, chrome(28)],
  [30, computer(27, 25)],
];

@customElement("task-bar")
class TaskBar extends LitElement {
  static styles = [base, css`
    :host { position: absolute; left: 0; right: 0; bottom: 0; height: 43px; background: #232323; display: flex; align-items: center; color: #eee; }
    .dock { height: 43px; }
    .tray { margin-left: auto; gap: 13px; padding-right: 5px; }
    .clock { display: flex; flex-direction: column; align-items: center; height: 43px; }
    .time { font-size: 15.500px; line-height: 21px; margin-top: 2px; }
    .date { font-size: 12.500px; line-height: 18px; margin-top: 1px; }
  `];
  render() {
    return html`
      <div class="dock row">${dock.map(([m, i]) => html`<span style=${styleMap({ "margin-left": m + "px" })}>${i}</span>`)}</div>
      <div class="tray row">
        ${ic(18, 15, "0 0 18 15", svg`<path d="M0 4Q9-4 18 4L9 15Z" fill="#fff"/>`)}
        ${ic(19, 18, "0 0 19 18", svg`<path d="M1 6.500H4L8 2V16L4 11.500H1Z" stroke="#eee" stroke-width="1.300"/><path d="M10.500 6.500Q12 9 10.500 11.500M13 4Q16 9 13 14M15.500 1.500Q20 9 15.500 16.500" stroke="#eee" stroke-width="1.200"/>`)}
        ${ic(19, 14, "0 0 19 14", svg`<path d="M1.500 0V3M3.500 0V3M0 3H5V5Q2.500 8 0 5ZM2.500 6V12H5" stroke="#fff" stroke-width="1.100"/><path d="M7 3H16.500V12H5V8H7Z" stroke="#fff"/><path d="M8.500 4.500H15V10.500H7V8.500H8.500Z" fill="#fff"/><rect x="17" y="5.500" width="2" height="4" fill="#fff"/>`)}
        <div class="clock"><span class="time">${fit("11:14", 31)}</span><span class="date">${fit("21/11/2023", 59)}</span></div>
      </div>`;
  }
}

/* ---------- root ---------- */

@customElement("app-root")
class AppRoot extends LitElement {
  static styles = css`
    :host { display: block; position: relative; width: 1920px; height: 1080px; overflow: hidden;
      font-family: "Open Sans", "Noto Sans", "Liberation Sans", sans-serif; background: #150010; }
    .wall { position: absolute; inset: 0; background:
      linear-gradient(90deg, #17000f 0, #1e0018 390px, #30000f 520px, #57200f 630px, #7a4a0e 760px, #9a5f12 880px, #a05a14 1010px, #9a4510 1120px, #85350e 1240px, #7e1c02 1340px, #661100 1520px, #480a00 1740px, #3c0800 1920px) 0 1018px / 100% 20px no-repeat,
      linear-gradient(180deg, #0000 200px, #1d0408 420px, #370902 720px, #3d0a00 900px, #480d00 1030px) 1860px 0 / 60px 100% no-repeat,
      radial-gradient(ellipse 420px 330px at 90px 520px, #35001f 0, #0000 100%),
      linear-gradient(90deg, #12000c, #1b0014 700px, #0b0006 1500px, #0a0004); }
  `;
  render() {
    return html`
      <div class="wall"></div>
      <desktop-icons></desktop-icons>
      <chrome-window></chrome-window>
      <konqueror-window></konqueror-window>
      <start-menu></start-menu>
      <task-bar></task-bar>`;
  }
}
